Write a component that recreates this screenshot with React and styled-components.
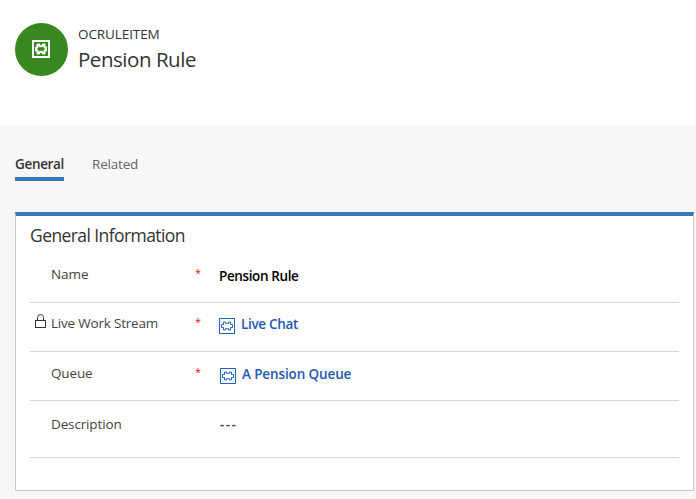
import React from 'react';
import styled, { createGlobalStyle } from 'styled-components';

const GlobalStyle = createGlobalStyle`
  * { box-sizing: border-box; }
  body {
    margin: 0;
    overflow: hidden;
    background: #f8f7f6;
    font-family: 'Open Sans', 'Noto Sans', sans-serif;
    font-size: 13.5px;
    line-height: 20px;
    color: #333;
  }
`;

const Page = styled.main`
  height: 499px;
  display: flex;
  flex-direction: column;
`;

const Header = styled.header`
  height: 125px;
  padding: 23px 15px 0;
  display: flex;
  gap: 10px;
  background: #fff;
`;

const Avatar = styled.div`
  width: 53px;
  height: 53px;
  padding: 17px 0 0 17px;
  border-radius: 50%;
  background: #38871f;
  svg { display: block; }
`;

const EntityType = styled.div`
  margin-top: 1px;
  letter-spacing: -0.1px;
`;

const Title = styled.h1`
  margin: 1px 0 0;
  font-size: 20.5px;
  line-height: 28px;
  font-weight: 400;
  letter-spacing: -0.46px;
`;

const Tabs = styled.nav`
  display: flex;
  gap: 28px;
  margin: 29px 15px 31px;
`;

const Tab = styled.div`
  height: 27px;
  border-bottom: 4px solid ${(p) => (p.$active ? '#3b76b8' : 'transparent')};
  color: ${(p) => (p.$active ? '#333' : '#666')};
  font-weight: ${(p) => (p.$active ? 600 : 400)};
  letter-spacing: ${(p) => (p.$active ? '-0.34px' : '-0.18px')};
`;

const Card = styled.section`
  width: 679px;
  height: 279px;
  margin-left: 15px;
  padding: 0 14px;
  background: #fff;
  border: 1px solid #c8c8c8;
  border-top: 4px solid #3b76b8;
`;

const CardTitle = styled.h2`
  margin: 0;
  padding-top: 6px;
  height: 35px;
  font-size: 17.5px;
  line-height: 26px;
  font-weight: 400;
  letter-spacing: -0.58px;
`;

const Row = styled.div`
  display: grid;
  grid-template-columns: 21px 144px 24px 1fr;
  height: ${(p) => p.$height}px;
  padding-top: ${(p) => p.$top}px;
  border-bottom: 1px solid #d6d6d6;
`;

const LockSlot = styled.span`
  padding: 1px 0 0 5px;
  svg { display: block; }
`;

const Label = styled.span`
  color: #444;
  letter-spacing: ${(p) => p.$track}px;
`;

const Required = styled.span`
  color: #e81515;
  font-size: 11px;
  line-height: 18px;
`;

const Value = styled.span`
  display: flex;
  gap: 6px;
  margin-top: ${(p) => p.$drop}px;
  padding-left: ${(p) => p.$indent || 0}px;
  font-weight: 600;
  color: ${(p) => p.$color};
  letter-spacing: ${(p) => p.$track}px;
  svg { flex: none; margin-top: 4px; }
`;

function EntityIcon() {
  return (
    <svg width="16" height="16" viewBox="0 0 16 16" fill="none" stroke="#2468b8">
      <rect x="0.5" y="0.5" width="15" height="15" />
      <path
        d="M4.5 4H6.5V5.3H9.5V4H11.5V6.5H13.5V9.5H11.5V12H9.5V10.7H6.5V12H4.5V9.5H2.5V6.5H4.5Z"
        strokeLinejoin="round"
      />
    </svg>
  );
}

function AvatarIcon() {
  return (
    <svg width="18" height="18" viewBox="0 0 18 18" fill="none" stroke="#fff">
      <rect x="1" y="1" width="16" height="16" strokeWidth="2" />
      <path
        d="M5.5 4.5H7L8 6.2H10L11 4.5H12.5V7.5H14V10.5H12.5V13.5H11L10 11.8H8L7 13.5H5.5V10.5H4V7.5H5.5Z"
        strokeWidth="2"
        strokeLinejoin="round"
      />
    </svg>
  );
}

function LockIcon() {
  return (
    <svg width="11" height="14" viewBox="0 0 11 14" fill="none" stroke="#333">
      <rect x="0.5" y="6.5" width="10" height="7" />
      <path d="M2.5 6.5V3.5a3 3 0 0 1 6 0v3" />
    </svg>
  );
}

export default function App() {
  return (
    <Page>
      <GlobalStyle />
      <Header>
        <Avatar><AvatarIcon /></Avatar>
        <div>
          <EntityType>OCRULEITEM</EntityType>
          <Title>Pension Rule</Title>
        </div>
      </Header>
      <Tabs>
        <Tab $active>General</Tab>
        <Tab>Related</Tab>
      </Tabs>
      <Card>
        <CardTitle>General Information</CardTitle>
        <Row $height={52} $top={13}>
          <span />
          <Label $track={-0.05}>Name</Label>
          <Required>*</Required>
          <Value $drop={2} $color="#000" $track={-0.38}>Pension Rule</Value>
        </Row>
        <Row $height={49} $top={10}>
          <LockSlot><LockIcon /></LockSlot>
          <Label $track={-0.2}>Live Work Stream</Label>
          <Required>*</Required>
          <Value $drop={1} $color="#2459b3" $track={-0.32}><EntityIcon />Live Chat</Value>
        </Row>
        <Row $height={49} $top={11}>
          <span />
          <Label $track={-0.15}>Queue</Label>
          <Required>*</Required>
          <Value $drop={1} $indent={1} $color="#2459b3" $track={-0.12}><EntityIcon />A Pension Queue</Value>
        </Row>
        <Row $height={57} $top={13}>
          <span />
          <Label $track={-0.14}>Description</Label>
          <span />
          <Value $drop={0} $indent={1} $color="#444" $track={1.4}>---</Value>
        </Row>
      </Card>
    </Page>
  );
}
